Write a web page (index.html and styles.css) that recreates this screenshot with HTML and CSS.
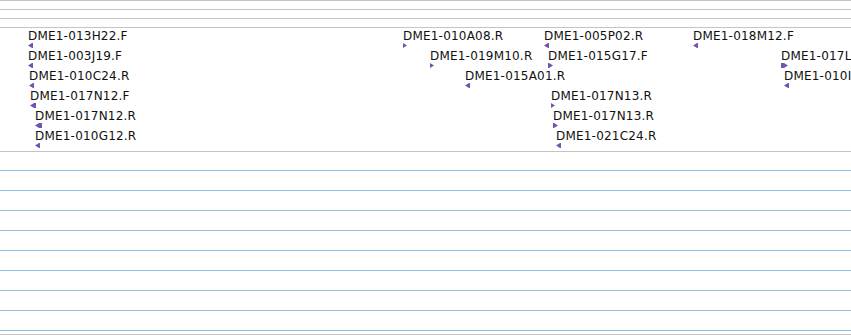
FILE: index.html
```html
<!DOCTYPE html>
<html lang="en">
<head>
    <meta charset="UTF-8">
    <title>Clone track</title>
    <link rel="stylesheet" href="styles.css">
</head>
<body>
    <div class="viewer">
        <div class="ruler">
            <div class="ruler-row"></div>
            <div class="ruler-row"></div>
            <div class="ruler-row"></div>
        </div>
        <div class="track" id="track"></div>
        <div class="lanes">
            <div class="lane"></div>
            <div class="lane"></div>
            <div class="lane"></div>
            <div class="lane"></div>
            <div class="lane"></div>
            <div class="lane"></div>
            <div class="lane"></div>
            <div class="lane"></div>
            <div class="lane"></div>
        </div>
    </div>

    <script>
        // [name, x, row, strand, arrow width]
        const features = [
            ['DME1-013H22.F', 28, 0, '-', 5],
            ['DME1-003J19.F', 28, 1, '-', 5],
            ['DME1-010C24.R', 29, 2, '-', 5],
            ['DME1-017N12.F', 30, 3, '-', 6],
            ['DME1-017N12.R', 35, 4, '-', 7],
            ['DME1-010G12.R', 35, 5, '-', 5],
            ['DME1-010A08.R', 403, 0, '+', 4],
            ['DME1-019M10.R', 430, 1, '+', 4],
            ['DME1-015A01.R', 465, 2, '-', 5],
            ['DME1-005P02.R', 544, 0, '-', 5],
            ['DME1-015G17.F', 548, 1, '+', 5],
            ['DME1-017N13.R', 551, 3, '+', 4],
            ['DME1-017N13.R', 553, 4, '+', 5],
            ['DME1-021C24.R', 556, 5, '-', 5],
            ['DME1-018M12.F', 693, 0, '-', 5],
            ['DME1-017L05.F', 781, 1, '+', 7],
            ['DME1-010I14.R', 784, 2, '-', 5]
        ];

        function arrowPoints(strand, w) {
            if (strand === '+') {
                return '0,0 ' + (w - 4) + ',0 ' + w + ',2.5 ' + (w - 4) + ',5 0,5';
            }
            return '0,2.5 4,0 ' + w + ',0 ' + w + ',5 4,5';
        }

        const track = document.getElementById('track');
        features.forEach(([name, x, row, strand, w]) => {
            const el = document.createElement('div');
            el.className = 'feature';
            el.style.left = x + 'px';
            el.style.top = (row * 20) + 'px';
            el.innerHTML =
                '<span class="feature-label">' + name + '</span>' +
                '<svg class="feature-arrow" width="' + w + '" height="5" viewBox="0 0 ' + w + ' 5">' +
                '<polygon points="' + arrowPoints(strand, w) + '"/></svg>';
            track.appendChild(el);
        });
    </script>
</body>
</html>
```

FILE: styles.css
```css
body {
    margin: 0;
    padding: 0;
    background-color: #ffffff;
    font-family: 'DejaVu Sans', Verdana, sans-serif;
    overflow: hidden;
}
.viewer {
    width: 851px;
    height: 335px;
    overflow: hidden;
}
.ruler-row {
    height: 9px;
    border-top: 1px solid #c4c4c4;
    box-sizing: border-box;
}
.track {
    position: relative;
    height: 125px;
    box-sizing: border-box;
    border-top: 1px solid #c4c4c4;
    border-bottom: 1px solid #c4c4c4;
    overflow: hidden;
}
.feature {
    position: absolute;
    display: flex;
    flex-direction: column;
    align-items: flex-start;
}
.feature-label {
    padding-top: 1px;
    font-size: 12px;
    line-height: 14px;
    letter-spacing: 0.2px;
    color: #111111;
    white-space: nowrap;
}
.feature-arrow {
    display: block;
    fill: #7156b0;
}
.lanes {
    padding-top: 18px;
    border-bottom: 1px solid #c4c4c4;
}
.lane {
    height: 20px;
    box-sizing: border-box;
    border-top: 1px solid #8fc1e6;
}
.lane:last-child {
    height: 4px;
}
```
